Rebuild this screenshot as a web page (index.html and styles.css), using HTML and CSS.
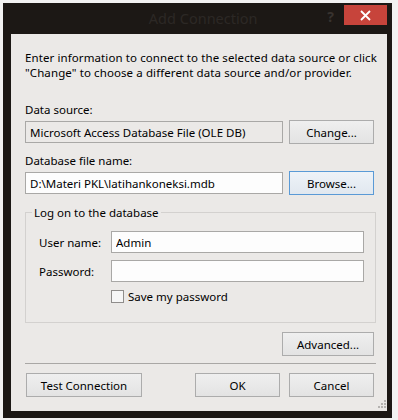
FILE: index.html
```html
<!DOCTYPE html>
<html lang="en">
<head>
    <meta charset="UTF-8">
    <title>Add Connection</title>
    <link rel="stylesheet" href="styles.css">
</head>
<body>

    <div class="window">
        <div class="titlebar">
            <span class="title">Add Connection</span>
            <span class="help">?</span>
            <span class="close">
                <svg width="11" height="11" viewBox="0 0 11 11"><path d="M1 1 L10 10 M10 1 L1 10" stroke="#fff" stroke-width="1.8"/></svg>
            </span>
        </div>

        <div class="client">
            <p class="intro">Enter information to connect to the selected data source or click<br>"Change" to choose a different data source and/or provider.</p>

            <label class="field-label">Data source:</label>
            <div class="field-row">
                <input class="textbox readonly" type="text" value="Microsoft Access Database File (OLE DB)" readonly>
                <button class="btn">Change...</button>
            </div>

            <label class="field-label second">Database file name:</label>
            <div class="field-row">
                <input class="textbox" type="text" value="D:\Materi PKL\latihankoneksi.mdb">
                <button class="btn focused">Browse...</button>
            </div>

            <fieldset class="logon">
                <legend>Log on to the database</legend>
                <div class="logon-grid">
                    <label>User name:</label>
                    <input class="textbox" type="text" value="Admin">
                    <label>Password:</label>
                    <input class="textbox" type="password" value="">
                </div>
                <label class="check"><span class="checkbox"></span>Save my password</label>
            </fieldset>

            <div class="advanced-row">
                <button class="btn wide">Advanced...</button>
            </div>

            <div class="footer">
                <button class="btn test">Test Connection</button>
                <div class="footer-right">
                    <button class="btn">OK</button>
                    <button class="btn">Cancel</button>
                </div>
            </div>

            <svg class="grip" width="8" height="8" viewBox="0 0 8 8">
                <rect x="6" y="0" width="2" height="2" fill="#b5b3b1"/>
                <rect x="3" y="3" width="2" height="2" fill="#b5b3b1"/>
                <rect x="6" y="3" width="2" height="2" fill="#b5b3b1"/>
                <rect x="0" y="6" width="2" height="2" fill="#b5b3b1"/>
                <rect x="3" y="6" width="2" height="2" fill="#b5b3b1"/>
                <rect x="6" y="6" width="2" height="2" fill="#b5b3b1"/>
            </svg>
        </div>
    </div>

</body>
</html>
```

FILE: styles.css
```css
/* --- Geral --- */
:root {
    --font-ui: "Noto Sans", "Open Sans", sans-serif;
    --color-frame: #1c1815;
    --color-client: #ebe9e7;
    --color-border: #a9a8a6;
    --color-btn-border: #acacac;
    --color-close: #c7443b;
}

* { box-sizing: border-box; }

html, body { height: 100%; }
body {
    margin: 0;
    background-color: #f2f2f2;
    font-family: var(--font-ui);
    font-size: 11.5px;
    color: #000;
}

/* --- Janela --- */
.window {
    margin: 3px 0 0 3px;
    width: 389px;
    height: 415px;
    background-color: var(--color-frame);
    display: flex;
    flex-direction: column;
}

.titlebar {
    height: 31px;
    display: flex;
    align-items: flex-start;
}
.titlebar .title {
    flex: 1;
    padding-left: 76px;
    padding-top: 5px;
    text-align: center;
    font-size: 14.5px;
    color: #2c2825;
}
.titlebar .help {
    padding-top: 4px;
    margin-right: 10px;
    font-size: 14px;
    font-weight: bold;
    color: #38332f;
}
.titlebar .close {
    margin-top: 2px;
    margin-right: 5px;
    width: 43px;
    height: 20px;
    background-color: var(--color-close);
    display: flex;
    align-items: center;
    justify-content: center;
}

.client {
    position: relative;
    flex: 1;
    margin: 0 5px 7px 8px;
    padding: 16px 13px 0 14px;
    background-color: var(--color-client);
    line-height: 15px;
}

.intro { margin: 0 0 22px; letter-spacing: 0.1px; white-space: nowrap; }

.field-label { display: block; margin-bottom: 3px; }
.field-label.second { margin-top: 9px; margin-bottom: 3px; }

.field-row {
    display: flex;
    align-items: center;
    justify-content: space-between;
    height: 24px;
}

.textbox {
    font-family: var(--font-ui);
    font-size: 11.5px;
    height: 22px;
    padding: 0 4px;
    border: 1px solid var(--color-border);
    background-color: #fdfdfd;
    color: #000;
    outline: none;
}
.field-row .textbox { width: 258px; }
.textbox.readonly { background-color: var(--color-client); }

/* --- Botões --- */
.btn {
    font-family: var(--font-ui);
    font-size: 11.5px;
    color: #000;
    width: 85px;
    height: 24px;
    padding: 0;
    border: 1px solid var(--color-btn-border);
    background: linear-gradient(#efefef, #e3e3e3);
}
.btn.focused { border-color: #5a9ad6; background: linear-gradient(#eef3f8, #e1e8ef); }
.btn.wide { width: 92px; }
.btn.test { width: 116px; }

/* --- Grupo de login --- */
.logon {
    margin: 10px 0 0;
    width: 351px;
    height: 118px;
    padding: 11px 11px 0 13px;
    border: 1px solid #d3d1cf;
}
.logon legend { padding: 0 2px; margin-left: -7px; }

.logon-grid {
    display: grid;
    grid-template-columns: 72px 253px;
    row-gap: 7px;
    align-items: center;
}
.logon-grid .textbox { width: 253px; }

.check {
    display: flex;
    align-items: center;
    margin: 7px 0 0 72px;
}
.checkbox {
    width: 13px;
    height: 13px;
    margin-right: 4px;
    border: 1px solid #8f8d8b;
    background-color: #f6f6f6;
}

.advanced-row {
    display: flex;
    justify-content: flex-end;
    margin-top: 9px;
    padding-right: 2px;
    padding-bottom: 7px;
    border-bottom: 1px solid #a9a7a5;
    width: 351px;
}

.footer {
    display: flex;
    justify-content: space-between;
    margin-top: 9px;
    padding-left: 1px;
}
.footer-right { display: flex; gap: 9px; }

.grip { position: absolute; right: 1px; bottom: 3px; }
```
